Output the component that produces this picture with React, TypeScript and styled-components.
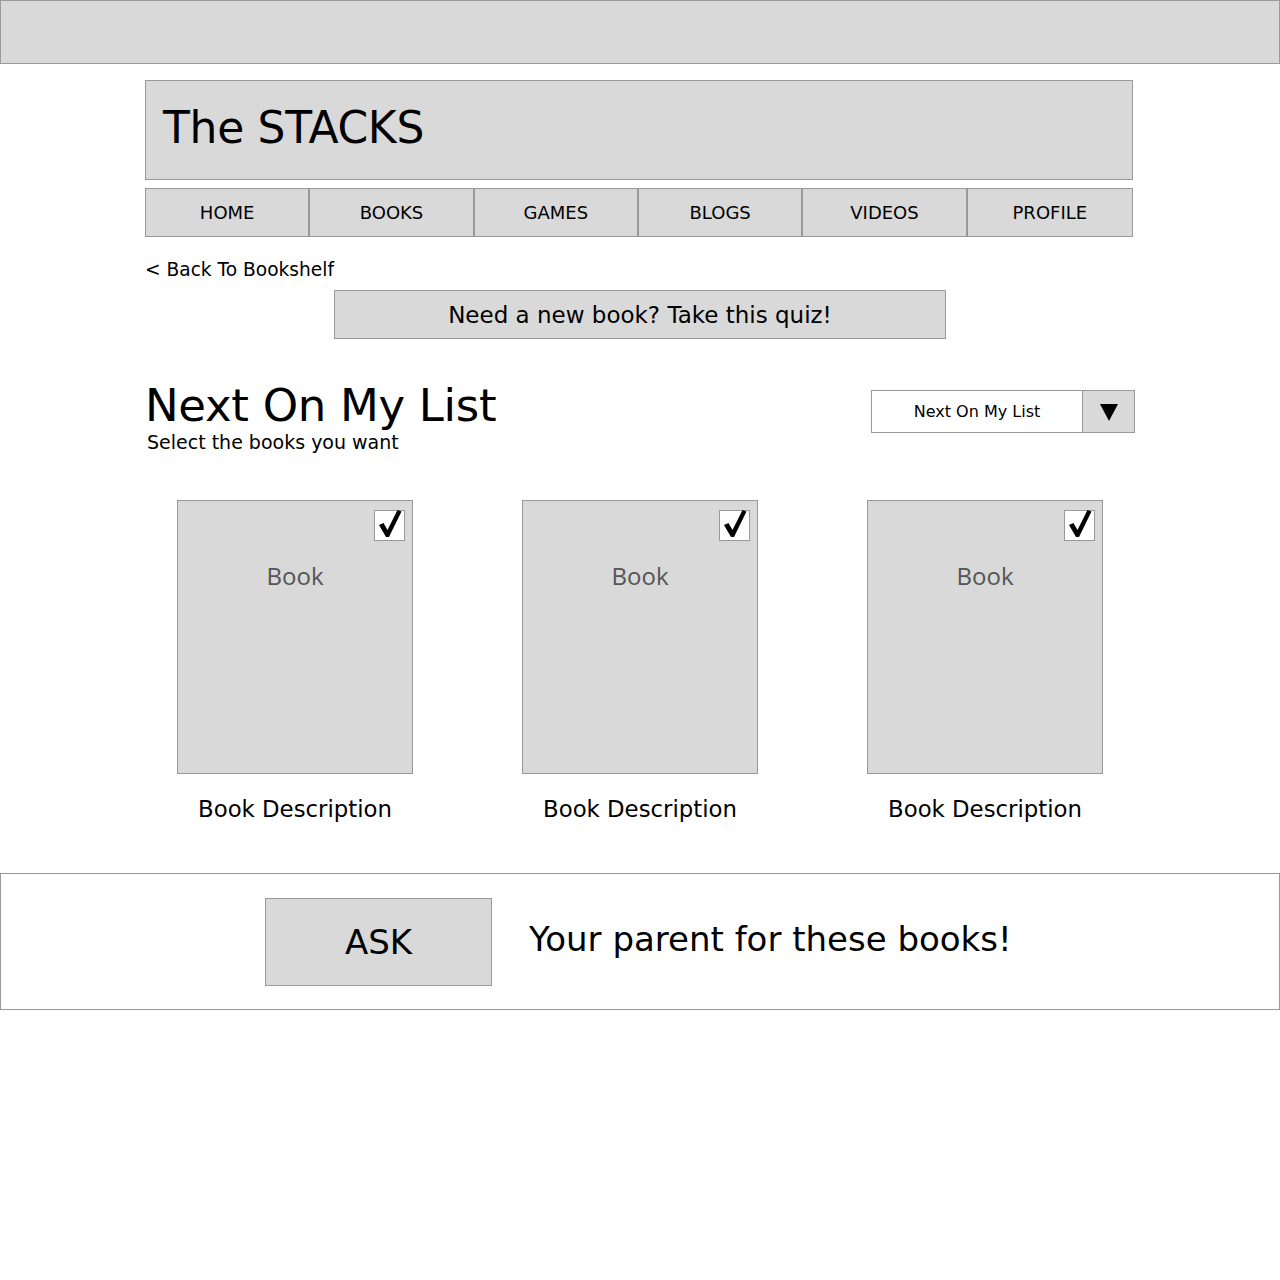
import React from 'react';
import styled, { createGlobalStyle } from 'styled-components';

const GlobalStyle = createGlobalStyle`
  body {
    margin: 0;
    background: #ffffff;
    font-family: 'DejaVu Sans', 'Liberation Sans', sans-serif;
    color: #000;
  }
`;

const Page = styled.div`
  width: 1280px;
  display: flex;
  flex-direction: column;
`;

const TopBar = styled.div`
  height: 62px;
  background: #d9d9d9;
  border: 1px solid #999;
`;

const Container = styled.div`
  width: 988px;
  margin: 16px 0 0 145px;
  display: flex;
  flex-direction: column;
`;

const Header = styled.div`
  height: 98px;
  background: #d9d9d9;
  border: 1px solid #999;
  display: flex;
  align-items: center;
  padding-left: 17px;
`;

const Title = styled.h1`
  margin: 0 0 6px;
  font-weight: normal;
  font-size: 44px;
  letter-spacing: -0.3px;
`;

const Nav = styled.nav`
  margin-top: 8px;
  display: grid;
  grid-template-columns: repeat(6, 1fr);
  height: 47px;
  border: 1px solid #999;
  background: #d9d9d9;
`;

const NavItem = styled.div<{ $last?: boolean }>`
  display: flex;
  align-items: center;
  justify-content: center;
  font-size: 18px;
  border-right: ${(p) => (p.$last ? 'none' : '2px solid #999')};
`;

const BackLink = styled.div`
  margin-top: 22px;
  font-size: 18.6px;
`;

const QuizButton = styled.div`
  margin: 10px 0 0 189px;
  width: 610px;
  height: 47px;
  background: #d9d9d9;
  border: 1px solid #999;
  display: flex;
  align-items: center;
  justify-content: center;
  font-size: 23px;
`;

const ListHeader = styled.div`
  margin-top: 42px;
  display: flex;
  justify-content: space-between;
  align-items: flex-start;
`;

const Heading = styled.h2`
  margin: 0;
  font-weight: normal;
  font-size: 45px;
  line-height: 50px;
  letter-spacing: -0.3px;
`;

const Subtitle = styled.div`
  margin: 0 0 0 2px;
  font-size: 19px;
`;

const Dropdown = styled.div`
  margin-top: 9px;
  width: 262px;
  height: 41px;
  border: 1px solid #999;
  display: flex;
  margin-right: -2px;
`;

const DropdownLabel = styled.div`
  flex: 1;
  display: flex;
  align-items: center;
  justify-content: center;
  font-size: 16px;
  background: #fff;
`;

const DropdownArrow = styled.div`
  width: 51px;
  background: #d9d9d9;
  border-left: 1px solid #999;
  display: flex;
  align-items: center;
  justify-content: center;
`;

const Books = styled.div`
  margin: 47px 0 0 32px;
  display: flex;
  gap: 109px;
`;

const BookColumn = styled.div`
  display: flex;
  flex-direction: column;
  align-items: center;
  width: 236px;
`;

const Cover = styled.div`
  position: relative;
  width: 234px;
  height: 272px;
  background: #d9d9d9;
  border: 1px solid #999;
  display: flex;
  justify-content: center;
`;

const CoverLabel = styled.div`
  margin-top: 58px;
  font-family: 'Open Sans', 'Liberation Sans', sans-serif;
  font-size: 24px;
  color: #555;
`;

const Check = styled.div`
  position: absolute;
  top: 9px;
  right: 7px;
  width: 29px;
  height: 29px;
  background: #fff;
  border: 1px solid #999;
  display: flex;
  align-items: center;
  justify-content: center;
`;

const Description = styled.div`
  margin-top: 22px;
  font-size: 22.8px;
  white-space: nowrap;
`;

const AskPanel = styled.div`
  margin-top: 51px;
  height: 135px;
  border: 1px solid #999;
  display: flex;
  align-items: center;
  padding-left: 264px;
`;

const AskButton = styled.div`
  width: 225px;
  height: 86px;
  background: #d9d9d9;
  border: 1px solid #999;
  display: flex;
  align-items: center;
  justify-content: center;
  font-size: 34px;
`;

const AskText = styled.div`
  margin: 0 0 6px 37px;
  font-size: 34px;
`;

const tabs = ['HOME', 'BOOKS', 'GAMES', 'BLOGS', 'VIDEOS', 'PROFILE'];

const CheckMark = () => (
  <svg width="24" height="28" viewBox="0 0 24 28" style={{ marginTop: -4 }}>
    <path d="M1 15 L5.5 13 L9.5 20 L19.5 0 L23.5 1.5 L11 27 L8 27 Z" fill="#000" />
  </svg>
);

const App: React.FC = () => {
  return (
    <Page>
      <GlobalStyle />
      <TopBar />
      <Container>
        <Header>
          <Title>The STACKS</Title>
        </Header>
        <Nav>
          {tabs.map((tab, index) => (
            <NavItem key={tab} $last={index === tabs.length - 1}>
              {tab}
            </NavItem>
          ))}
        </Nav>
        <BackLink>&lt; Back To Bookshelf</BackLink>
        <QuizButton>Need a new book? Take this quiz!</QuizButton>
        <ListHeader>
          <div>
            <Heading>Next On My List</Heading>
            <Subtitle>Select the books you want</Subtitle>
          </div>
          <Dropdown>
            <DropdownLabel>Next On My List</DropdownLabel>
            <DropdownArrow>
              <svg width="20" height="20" viewBox="0 0 20 20">
                <path d="M1 2 H19 L10 19 Z" fill="#000" />
              </svg>
            </DropdownArrow>
          </Dropdown>
        </ListHeader>
        <Books>
          {[0, 1, 2].map((i) => (
            <BookColumn key={i}>
              <Cover>
                <CoverLabel>Book</CoverLabel>
                <Check>
                  <CheckMark />
                </Check>
              </Cover>
              <Description>Book Description</Description>
            </BookColumn>
          ))}
        </Books>
      </Container>
      <AskPanel>
        <AskButton>ASK</AskButton>
        <AskText>Your parent for these books!</AskText>
      </AskPanel>
    </Page>
  );
};

export default App;
